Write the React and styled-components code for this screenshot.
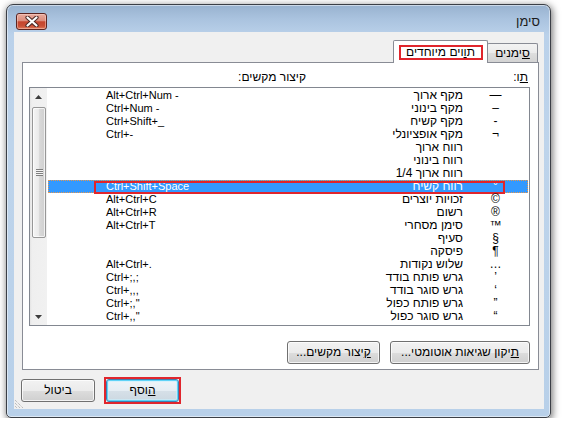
import React from 'react';
import styled, { createGlobalStyle, css } from 'styled-components';

const GlobalStyle = createGlobalStyle`
  html, body { margin: 0; padding: 0; background: #ffffff; }
  body {
    font-family: "Liberation Sans", "DejaVu Sans", sans-serif;
    font-size: 12px;
    color: #000;
  }
`;

const Page = styled.div`
  padding: 4px 0 0 6px;
`;

const Window = styled.div`
  direction: rtl;
  box-sizing: border-box;
  width: 545px;
  height: 414px;
  display: flex;
  flex-direction: column;
  padding: 0 6px 8px 7px;
  border: 1px solid #3b3f46;
  border-radius: 7px 7px 5px 5px;
  background: linear-gradient(
    to bottom,
    #98b2cf 0px,
    #aac3df 14px,
    #bad1ea 30px,
    #bed4eb 140px,
    #b8d0e9 100%
  );
  box-shadow: inset 0 0 0 1px rgba(255, 255, 255, 0.5),
    1px 2px 7px 1px rgba(0, 0, 0, 0.5);
`;

const TitleBar = styled.div`
  height: 27px;
  display: flex;
  justify-content: space-between;
  align-items: flex-start;
  padding: 0 4px 0 2px;
`;

const Title = styled.div`
  margin-top: 10px;
  font-size: 13px;
  line-height: 14px;
  color: #1b1b1b;
`;

const CloseButton = styled.div`
  box-sizing: border-box;
  margin-top: 8px;
  width: 31px;
  height: 17px;
  display: flex;
  align-items: center;
  justify-content: center;
  border: 1px solid #5c2521;
  border-radius: 3px;
  background: linear-gradient(
    to bottom,
    #e9ab9e 0%,
    #dc8c7c 45%,
    #c5452e 52%,
    #c94f36 80%,
    #e07c5c 100%
  );
  box-shadow: inset 0 0 0 1px rgba(255, 220, 210, 0.45);
`;

const Client = styled.div`
  position: relative;
  flex: 1;
  display: flex;
  flex-direction: column;
  padding: 8px 5px 5px 8px;
  background: #f0f0f0;
`;

const TabStrip = styled.div`
  height: 22px;
  display: flex;
  align-items: flex-end;
  padding-right: 1px;
`;

const Tab = styled.div`
  box-sizing: border-box;
  display: flex;
  justify-content: center;
  border: 1px solid #898c95;
  border-bottom: none;
  border-radius: 2px 2px 0 0;
  line-height: 13px;
  ${(p) =>
    p.$active
      ? css`
          position: relative;
          z-index: 1;
          width: 95px;
          height: 23px;
          margin-bottom: -1px;
          margin-right: -1px;
          padding-top: 4px;
          align-items: flex-start;
          background: #ffffff;
        `
      : css`
          width: 51px;
          height: 19px;
          align-items: center;
          background: linear-gradient(
            to bottom,
            #f3f3f3 0%,
            #ebebeb 50%,
            #dedede 51%,
            #d3d3d3 100%
          );
        `}
`;

const Marked = styled.span`
  box-sizing: border-box;
  display: inline-block;
  width: 84px;
  height: 15px;
  text-align: center;
  border: 2px solid #e0252c;
  line-height: 11px;
`;

const Key = styled.span`
  text-decoration: underline;
`;

const Panel = styled.div`
  box-sizing: border-box;
  height: 308px;
  display: flex;
  flex-direction: column;
  padding: 8px 8px 5px 6px;
  border: 1px solid #898c95;
  background: #ffffff;
`;

const LabelRow = styled.div`
  display: grid;
  grid-template-columns: 222px auto;
  height: 13px;
  line-height: 13px;
  padding-right: 2px;
`;

const ListBox = styled.div`
  box-sizing: border-box;
  margin-top: 3px;
  height: 239px;
  display: flex;
  border: 1px solid #828790;
  background: #ffffff;
`;

const Rows = styled.div`
  flex: 1;
  display: flex;
  flex-direction: column;
  padding: 1px 1px 0 1px;
`;

const Row = styled.div`
  position: relative;
  display: grid;
  grid-template-columns: 65px 200px 1fr;
  height: 13px;
  line-height: 13px;
  white-space: nowrap;
  ${(p) =>
    p.$selected &&
    css`
      background: #3399ff;
      color: #ffffff;
      outline: 1px dotted #e9974c;
      outline-offset: -1px;
    `}
`;

const SymbolCell = styled.span`
  text-align: center;
  font-size: 12px;
`;

const NameCell = styled.span`
  text-align: right;
`;

const ShortcutCell = styled.span`
  direction: ltr;
  text-align: left;
  padding-left: 58px;
  font-size: 11px;
`;

const RowMark = styled.span`
  position: absolute;
  top: 1px;
  bottom: -1px;
  left: 46px;
  right: 23px;
  border: 2px solid #e0252c;
  pointer-events: none;
`;

const ScrollBar = styled.div`
  width: 17px;
  display: flex;
  flex-direction: column;
  background: linear-gradient(to right, #e4e4e4 0px, #efefef 2px, #f1f1f1 100%);
`;

const ArrowBox = styled.div`
  height: 17px;
  display: flex;
  align-items: center;
  justify-content: center;
`;

const Track = styled.div`
  flex: 1;
  display: flex;
  flex-direction: column;
`;

const Thumb = styled.div`
  box-sizing: border-box;
  margin: 2px 1px 0 2px;
  height: 131px;
  display: flex;
  align-items: center;
  justify-content: center;
  border: 1px solid #979797;
  border-radius: 2px;
  background: linear-gradient(
    to right,
    #f4f4f4 0%,
    #ebebeb 45%,
    #d9d9d9 55%,
    #cfcfcf 100%
  );
  box-shadow: inset 0 0 0 1px rgba(255, 255, 255, 0.7);
`;

const Gripper = styled.div`
  width: 7px;
  height: 7px;
  background: repeating-linear-gradient(
    to bottom,
    #7e7e7e 0px,
    #7e7e7e 1px,
    #f4f4f4 1px,
    #f4f4f4 2px
  );
`;

const ButtonRow = styled.div`
  margin-top: 15px;
  display: flex;
  gap: 10px;
`;

const Button = styled.div`
  box-sizing: border-box;
  width: ${(p) => p.$w}px;
  height: 23px;
  display: flex;
  align-items: center;
  justify-content: center;
  line-height: 13px;
  border: 1px solid #707070;
  border-radius: 3px;
  background: linear-gradient(
    to bottom,
    #f2f2f2 0%,
    #ebebeb 50%,
    #dddddd 51%,
    #cfcfcf 100%
  );
  box-shadow: inset 0 0 0 1px rgba(255, 255, 255, 0.75);
  ${(p) =>
    p.$default &&
    css`
      border-color: #3c7fb1;
      background: linear-gradient(
        to bottom,
        #eef4f8 0%,
        #e5edf3 50%,
        #d6e0e8 51%,
        #ccd8e1 100%
      );
      box-shadow: inset 0 0 0 1px #5fd3f7, inset 0 0 0 2px rgba(200, 240, 255, 0.6);
    `}
`;

const DialogButtons = styled.div`
  margin-top: 7px;
  margin-left: -1px;
  display: flex;
  justify-content: flex-end;
  align-items: center;
  gap: 9px;
`;

const ButtonMark = styled.div`
  border: 2px solid #e0252c;
  display: flex;
`;

const Grip = styled.svg`
  position: absolute;
  left: 1px;
  bottom: 1px;
`;

const entries = [
  { sym: '—', name: 'מקף ארוך', keys: 'Alt+Ctrl+Num -' },
  { sym: '–', name: 'מקף בינוני', keys: 'Ctrl+Num -' },
  { sym: '-', name: 'מקף קשיח', keys: 'Ctrl+Shift+_' },
  { sym: '¬', name: 'מקף אופציונלי', keys: 'Ctrl+-' },
  { sym: '', name: 'רווח ארוך', keys: '' },
  { sym: '', name: 'רווח בינוני', keys: '' },
  { sym: '', name: 'רווח ארוך 1/4', keys: '' },
  { sym: '°', name: 'רווח קשיח', keys: 'Ctrl+Shift+Space', selected: true },
  { sym: '©', name: 'זכויות יוצרים', keys: 'Alt+Ctrl+C' },
  { sym: '®', name: 'רשום', keys: 'Alt+Ctrl+R' },
  { sym: '™', name: 'סימן מסחרי', keys: 'Alt+Ctrl+T' },
  { sym: '§', name: 'סעיף', keys: '' },
  { sym: '¶', name: 'פיסקה', keys: '' },
  { sym: '…', name: 'שלוש נקודות', keys: 'Alt+Ctrl+.' },
  { sym: '’', name: 'גרש פותח בודד', keys: 'Ctrl+;,;' },
  { sym: '‘', name: 'גרש סוגר בודד', keys: 'Ctrl+,,,' },
  { sym: '”', name: 'גרש פותח כפול', keys: 'Ctrl+;,"' },
  { sym: '“', name: 'גרש סוגר כפול', keys: 'Ctrl+,,"' },
];

const CloseGlyph = () => (
  <svg width="14" height="11" viewBox="0 0 14 11">
    <path d="M2.5 1.5 L11.5 9.5 M11.5 1.5 L2.5 9.5" stroke="#4b2824" strokeWidth="4.2" strokeLinecap="round" fill="none" />
    <path d="M2.5 1.5 L11.5 9.5 M11.5 1.5 L2.5 9.5" stroke="#ffffff" strokeWidth="2.2" strokeLinecap="round" fill="none" />
  </svg>
);

const Arrow = ({ down }) => (
  <svg width="7" height="4" viewBox="0 0 7 4">
    <path d={down ? 'M0 0 H7 L3.5 4 Z' : 'M0 4 H7 L3.5 0 Z'} fill="#3c3c3c" />
  </svg>
);

export default function App() {
  return (
    <Page>
      <GlobalStyle />
      <Window>
        <TitleBar>
          <Title>סימן</Title>
          <CloseButton>
            <CloseGlyph />
          </CloseButton>
        </TitleBar>
        <Client>
          <TabStrip>
            <Tab>
              <span>
                <Key>ס</Key>ימנים
              </span>
            </Tab>
            <Tab $active>
              <Marked>
                ת<Key>ו</Key>וים מיוחדים
              </Marked>
            </Tab>
          </TabStrip>
          <Panel>
            <LabelRow>
              <span>
                <Key>ת</Key>ו:
              </span>
              <span>קיצור מקשים:</span>
            </LabelRow>
            <ListBox>
              <Rows>
                {entries.map((e, i) => (
                  <Row key={i} $selected={e.selected}>
                    <SymbolCell>{e.sym}</SymbolCell>
                    <NameCell>{e.name}</NameCell>
                    <ShortcutCell>{e.keys}</ShortcutCell>
                    {e.selected && <RowMark />}
                  </Row>
                ))}
              </Rows>
              <ScrollBar>
                <ArrowBox>
                  <Arrow />
                </ArrowBox>
                <Track>
                  <Thumb>
                    <Gripper />
                  </Thumb>
                </Track>
                <ArrowBox>
                  <Arrow down />
                </ArrowBox>
              </ScrollBar>
            </ListBox>
            <ButtonRow>
              <Button $w={140}>
                <span>
                  <Key>ת</Key>יקון שגיאות אוטומטי...
                </span>
              </Button>
              <Button $w={93}>
                <span>
                  <Key>ק</Key>יצור מקשים...
                </span>
              </Button>
            </ButtonRow>
          </Panel>
          <DialogButtons>
            <ButtonMark>
              <Button $w={73} $default>
                <span>
                  <Key>ה</Key>וסף
                </span>
              </Button>
            </ButtonMark>
            <Button $w={74}>ביטול</Button>
          </DialogButtons>
          <Grip width="9" height="9" viewBox="0 0 9 9">
            <path d="M0 1 L8 9 M0 4 L5 9 M0 7 L2 9" stroke="#a5a5a5" strokeWidth="1" strokeDasharray="1 1" fill="none" />
          </Grip>
        </Client>
      </Window>
    </Page>
  );
}
